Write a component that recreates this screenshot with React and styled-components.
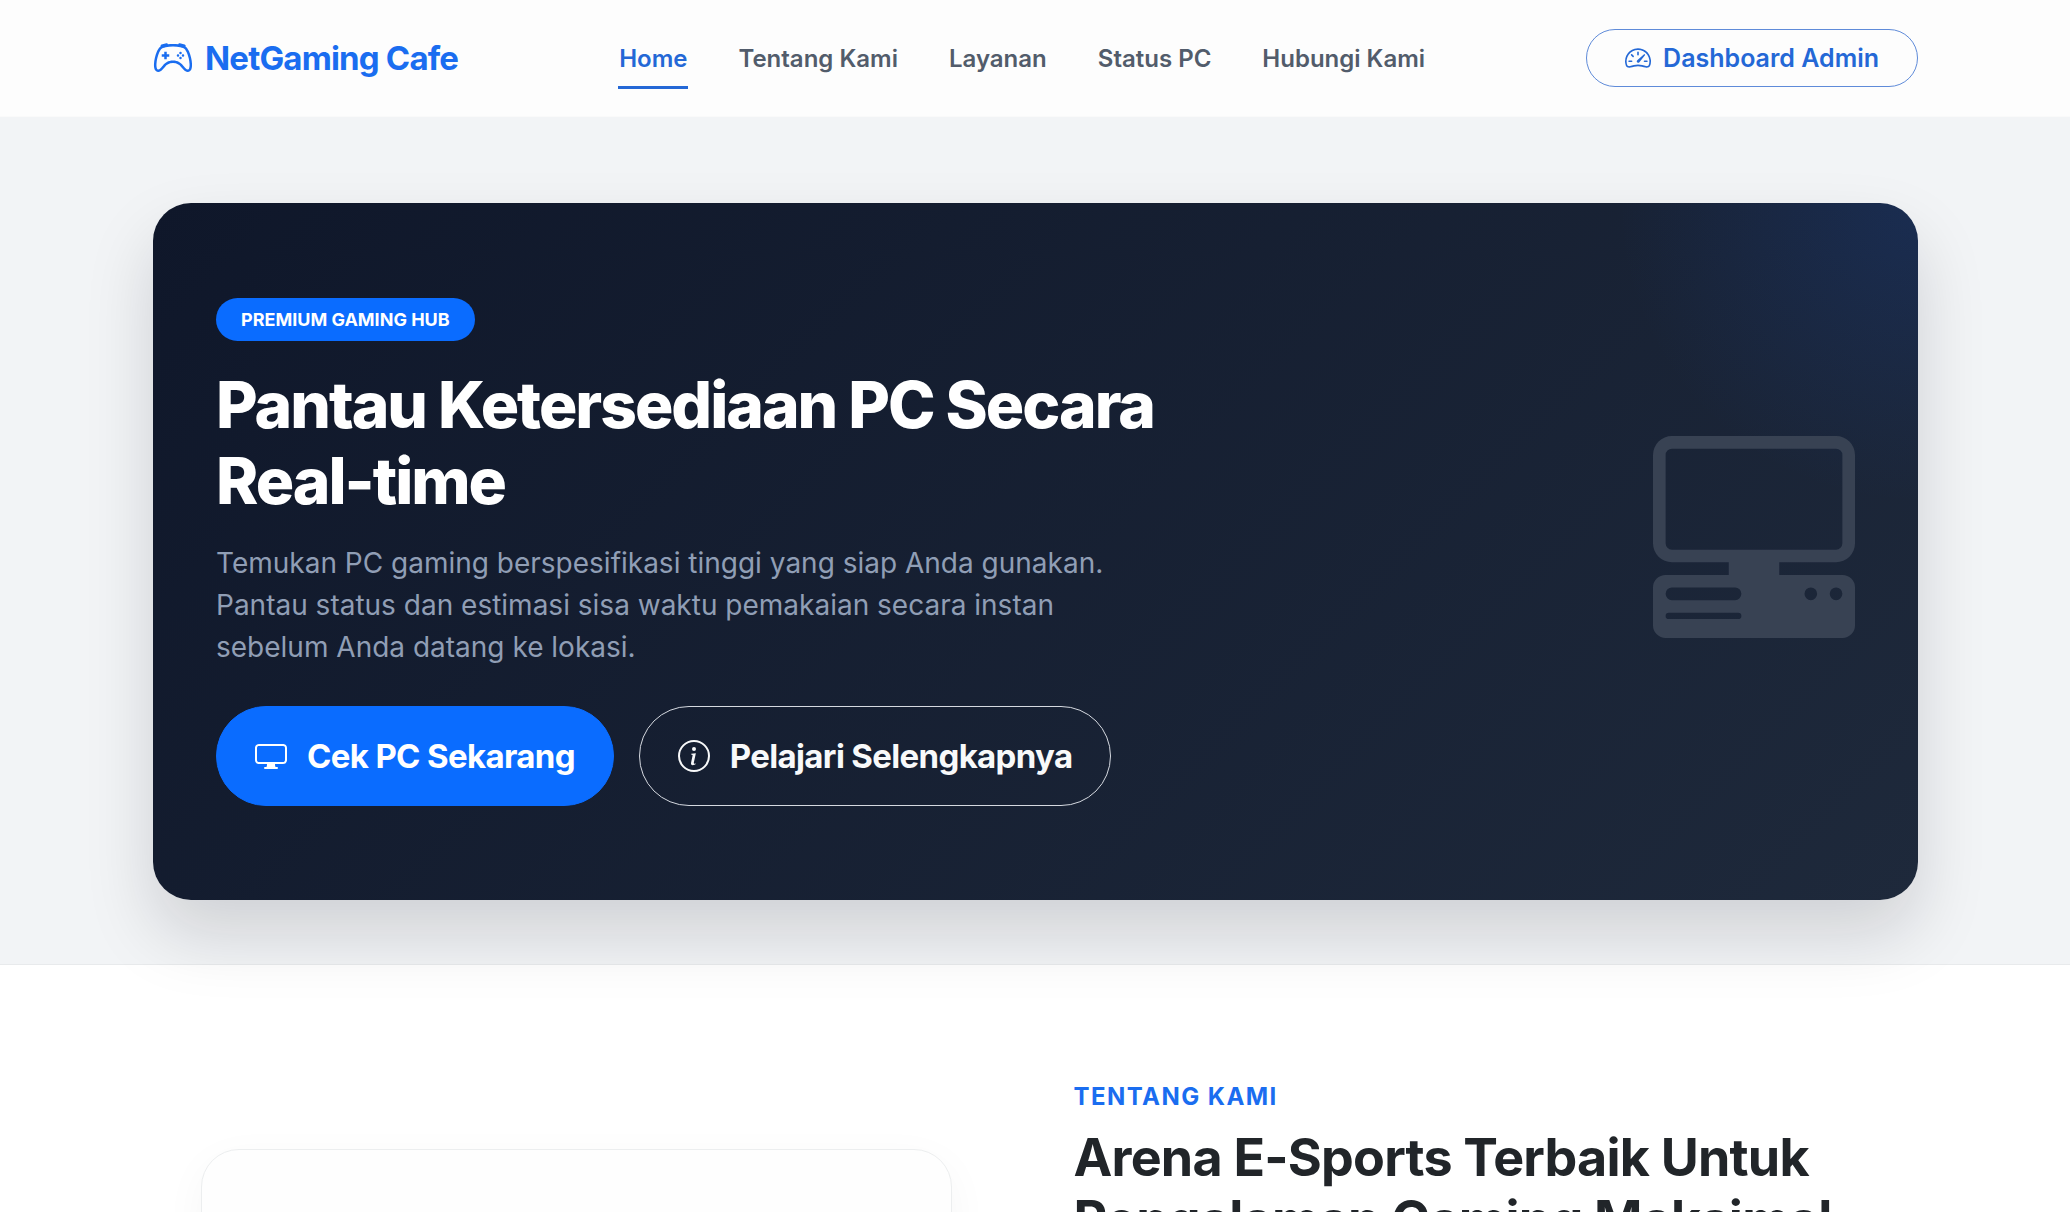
import React, { useState } from "react";
import styled, { createGlobalStyle } from "styled-components";
import {
  BsController,
  BsDisplay,
  BsInfoCircle,
  BsPcDisplayHorizontal,
  BsSpeedometer2,
} from "react-icons/bs";

const navItems = [
  { title: "Home", slug: "#home" },
  { title: "Tentang Kami", slug: "#tentang" },
  { title: "Layanan", slug: "#layanan" },
  { title: "Status PC", slug: "#status" },
  { title: "Hubungi Kami", slug: "#kontak" },
];

const App = () => {
  const [active, setActive] = useState("#home");

  return (
    <Page>
      <GlobalStyle />
      <Header>
        <Container>
          <Navbar>
            <Logo href="#home">
              <BsController size={40} />
              NetGaming Cafe
            </Logo>
            <NavLinks>
              {navItems.map((item) => (
                <NavLink
                  key={item.slug}
                  href={item.slug}
                  $active={active === item.slug}
                  onClick={() => setActive(item.slug)}
                >
                  {item.title}
                </NavLink>
              ))}
            </NavLinks>
            <AdminButton type="button">
              <BsSpeedometer2 size={26} />
              Dashboard Admin
            </AdminButton>
          </Navbar>
        </Container>
      </Header>

      <Hero id="home">
        <Container>
          <HeroCard>
            <HeroContent>
              <Badge>PREMIUM GAMING HUB</Badge>
              <HeroTitle>Pantau Ketersediaan PC Secara Real-time</HeroTitle>
              <HeroText>
                Temukan PC gaming berspesifikasi tinggi yang siap Anda gunakan.
                Pantau status dan estimasi sisa waktu pemakaian secara instan
                sebelum Anda datang ke lokasi.
              </HeroText>
              <Actions>
                <HeroButton type="button" $primary>
                  <BsDisplay size={32} />
                  Cek PC Sekarang
                </HeroButton>
                <HeroButton type="button">
                  <BsInfoCircle size={32} />
                  Pelajari Selengkapnya
                </HeroButton>
              </Actions>
            </HeroContent>
            <HeroArt>
              <BsPcDisplayHorizontal size={202} />
            </HeroArt>
          </HeroCard>
        </Container>
      </Hero>

      <About id="tentang">
        <Container>
          <AboutGrid>
            <AboutCard />
            <div>
              <Eyebrow>TENTANG KAMI</Eyebrow>
              <AboutTitle>
                Arena E-Sports Terbaik Untuk Pengalaman Gaming Maksimal
              </AboutTitle>
            </div>
          </AboutGrid>
        </Container>
      </About>
    </Page>
  );
};

const GlobalStyle = createGlobalStyle`
  * {
    box-sizing: border-box;
  }
  body {
    margin: 0;
    background: #fff;
    color: #212529;
    font-family: Inter, "Liberation Sans", sans-serif;
  }
  h1, h2, p {
    margin: 0;
  }
  a {
    text-decoration: none;
  }
  button {
    font-family: inherit;
    cursor: pointer;
  }
`;

const Page = styled.div`
  height: 100vh;
  overflow: hidden;
`;

const Container = styled.div`
  width: 100%;
  max-width: 1796px;
  margin: 0 auto;
  padding: 0 15px 0 16px;
`;

const Header = styled.header`
  background: #fdfdfd;
  border-bottom: 1px solid #fafafa;
`;

const Navbar = styled.nav`
  display: flex;
  align-items: center;
  justify-content: space-between;
  min-height: 116px;
`;

const Logo = styled.a`
  display: flex;
  align-items: center;
  gap: 12px;
  font-size: 33px;
  font-weight: 700;
  letter-spacing: -0.025em;
  color: #1a6df0;
`;

const NavLinks = styled.div`
  display: flex;
  gap: 49px;
`;

const NavLink = styled.a`
  padding: 14px 1px 12px;
  font-size: 24px;
  line-height: 36px;
  font-weight: 600;
  color: ${({ $active }) => ($active ? "#2468d6" : "#525c6b")};
  box-shadow: ${({ $active }) => ($active ? "inset 0 -3px #2468d6" : "none")};
`;

const AdminButton = styled.button`
  display: flex;
  align-items: center;
  gap: 12px;
  height: 58px;
  padding: 0 38px;
  border: 1px solid #5f8bd9;
  border-radius: 29px;
  background: transparent;
  color: #2468d6;
  font-size: 25px;
  font-weight: 600;
`;

const Hero = styled.section`
  padding: 86px 0 64px;
  background: #f2f4f6;
  border-bottom: 1px solid #e8eaec;
`;

const HeroCard = styled.div`
  display: flex;
  align-items: center;
  justify-content: space-between;
  padding: 95px 63px 94px;
  border-radius: 38px;
  background:
    radial-gradient(circle at 100% 0, rgba(26, 90, 220, 0.16), rgba(26, 90, 220, 0) 300px),
    linear-gradient(135deg, #0f172a, #1e293b);
  box-shadow: 0 34px 68px rgba(15, 15, 30, 0.15);
`;

const HeroContent = styled.div`
  max-width: 1100px;
`;

const Badge = styled.span`
  display: inline-flex;
  align-items: center;
  height: 43px;
  padding: 0 25px;
  border-radius: 22px;
  background: #0a6cff;
  color: #fff;
  font-size: 18px;
  font-weight: 700;
`;

const HeroTitle = styled.h1`
  margin: 26px 0 23px;
  color: #fff;
  font-size: 64px;
  line-height: 76px;
  font-weight: 800;
  letter-spacing: -2px;
`;

const HeroText = styled.p`
  max-width: 908px;
  color: #909eb5;
  font-size: 28px;
  line-height: 42px;
`;

const Actions = styled.div`
  display: flex;
  gap: 25px;
  margin-top: 38px;
`;

const HeroButton = styled.button`
  display: flex;
  align-items: center;
  gap: 20px;
  height: 100px;
  padding: 0 38px;
  border: 1px solid ${({ $primary }) => ($primary ? "#0a6cff" : "#d5d9e0")};
  border-radius: 50px;
  background: ${({ $primary }) => ($primary ? "#0a6cff" : "transparent")};
  color: ${({ $primary }) => ($primary ? "#fff" : "#f8f9fa")};
  font-size: 33px;
  font-weight: 700;
  letter-spacing: -0.02em;
`;

const HeroArt = styled.div`
  display: flex;
  padding-bottom: 30px;
  color: #384253;
`;

const About = styled.section`
  padding: 114px 0;
`;

const AboutGrid = styled.div`
  display: grid;
  grid-template-columns: 1fr 1fr;
  gap: 76px;
`;

const AboutCard = styled.div`
  min-height: 480px;
  margin: 70px 46px 0 48px;
  border: 1px solid #eceeef;
  border-radius: 38px;
  background: #fefefe;
  box-shadow: 0 12px 44px rgba(0, 0, 0, 0.04);
`;

const Eyebrow = styled.p`
  color: #1a6df0;
  font-size: 24px;
  line-height: 36px;
  font-weight: 700;
  letter-spacing: 0.06em;
`;

const AboutTitle = styled.h2`
  margin-top: 12px;
  font-size: 52px;
  line-height: 62px;
  font-weight: 700;
  letter-spacing: -0.015em;
`;

export default App;
